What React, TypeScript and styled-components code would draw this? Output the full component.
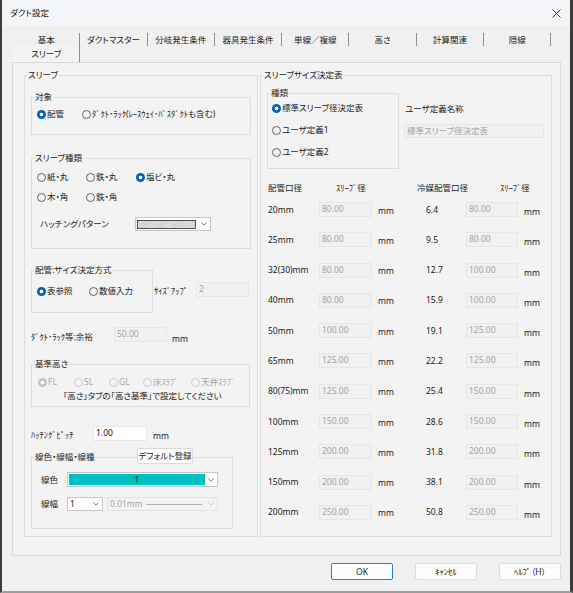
import { Fragment } from "react";
import styled, { createGlobalStyle } from "styled-components";

const GlobalStyle = createGlobalStyle`
  * { box-sizing: border-box; }
  body {
    margin: 0;
    background: #f0f0f0;
    font-family: "Noto Sans", "Noto Sans CJK JP", sans-serif;
    font-size: 8.5px;
    line-height: 12px;
    color: #1b1b1b;
    font-feature-settings: "palt";
  }
`;

const Window = styled.div`
  width: 573px;
  height: 593px;
  display: flex;
  flex-direction: column;
  background: #f0f0f0;
  border-left: 2px solid #3b3b3b;
  border-right: 3px solid #3b3b3b;
  border-bottom: 2px solid #9c9c9c;
`;

const TitleBar = styled.div`
  height: 26px;
  flex: none;
  display: flex;
  align-items: center;
  justify-content: space-between;
  padding: 0 9px 0 8px;
  background: #f3f5f9;
`;

const TabStrip = styled.div`
  margin: 7px 0 0 11px;
  display: flex;
  flex-direction: column;
`;

const TabRow = styled.div<{ $h: number }>`
  display: flex;
  height: ${(p) => p.$h}px;
`;

const Tab = styled.div<{ $active?: boolean }>`
  width: 67.3px;
  display: flex;
  align-items: center;
  justify-content: center;
  border-right: 1px solid #8f8f8f;
  background: ${(p) => (p.$active ? "#f3f3f3" : "transparent")};
`;

const Panel = styled.div`
  margin-left: 10px;
  width: 549px;
  height: 494px;
  flex: none;
  border: 1px solid #d9d9d9;
  background: #f3f3f3;
  padding: 6px 0 0 11px;
  display: flex;
  gap: 2px;
`;

const Group = styled.fieldset<{ $w: number; $h: number; $mt?: number; $ml?: number }>`
  position: relative;
  flex: none;
  margin: ${(p) => p.$mt ?? 0}px 0 0 ${(p) => p.$ml ?? 0}px;
  padding: 0;
  min-width: 0;
  width: ${(p) => p.$w}px;
  height: ${(p) => p.$h}px;
  border: 1px solid #dcdcdc;
`;

const Legend = styled.legend`
  margin-left: 2px;
  padding: 0 1px;
  line-height: 12px;
`;

const Row = styled.div<{ $mt?: number; $ml?: number; $h?: number; $top?: boolean }>`
  display: flex;
  align-items: ${(p) => (p.$top ? "flex-start" : "center")};
  margin-top: ${(p) => p.$mt ?? 0}px;
  padding-left: ${(p) => p.$ml ?? 0}px;
  height: ${(p) => (p.$h ? `${p.$h}px` : "auto")};
`;

const Column = styled.div<{ $ml?: number }>`
  display: flex;
  flex-direction: column;
  margin-left: ${(p) => p.$ml ?? 0}px;
`;

const Label = styled.span<{ $w?: number; $ml?: number; $mt?: number; $pt?: number; $dim?: boolean }>`
  flex: none;
  display: inline-block;
  width: ${(p) => (p.$w ? `${p.$w}px` : "auto")};
  margin-left: ${(p) => p.$ml ?? 0}px;
  margin-top: ${(p) => p.$mt ?? 0}px;
  padding-top: ${(p) => p.$pt ?? 0}px;
  color: ${(p) => (p.$dim ? "#a6a6a6" : "inherit")};
  white-space: nowrap;
`;

const Field = styled.div<{ $w: number; $h?: number; $white?: boolean; $mt?: number }>`
  flex: none;
  width: ${(p) => p.$w}px;
  height: ${(p) => p.$h ?? 15}px;
  margin-top: ${(p) => p.$mt ?? 0}px;
  padding: 0 2px;
  line-height: 12px;
  border: 1px solid #e6e6e6;
  background: ${(p) => (p.$white ? "#ffffff" : "#f1f1f1")};
  color: ${(p) => (p.$white ? "#1b1b1b" : "#a3a3a3")};
  white-space: nowrap;
  overflow: hidden;
`;

const RadioItem = styled.span<{ $w?: number; $disabled?: boolean }>`
  flex: none;
  display: inline-flex;
  align-items: center;
  gap: 1px;
  width: ${(p) => (p.$w ? `${p.$w}px` : "auto")};
  color: ${(p) => (p.$disabled ? "#a6a6a6" : "inherit")};
  white-space: nowrap;
`;

const Dot = styled.span<{ $checked?: boolean; $disabled?: boolean }>`
  flex: none;
  width: 9px;
  height: 9px;
  border-radius: 50%;
  border: ${(p) =>
    p.$checked ? "none" : `1px solid ${p.$disabled ? "#c9c9c9" : "#646464"}`};
  background: ${(p) =>
    p.$checked
      ? `radial-gradient(circle, #fff 0 1.7px, ${p.$disabled ? "#c4c4c4" : "#005fb8"} 2.2px 100%)`
      : "transparent"};
`;

const Radio = ({
  w,
  checked,
  disabled,
  children,
}: {
  w?: number;
  checked?: boolean;
  disabled?: boolean;
  children: React.ReactNode;
}) => (
  <RadioItem $w={w} $disabled={disabled}>
    <Dot $checked={checked} $disabled={disabled} />
    <span>{children}</span>
  </RadioItem>
);

const RadioStack = styled.div`
  display: flex;
  flex-direction: column;
  gap: 10px;
  margin-top: 3px;
  padding-left: 4px;
`;

const Combo = styled.div<{ $w: number; $h: number; $ml?: number; $disabled?: boolean }>`
  flex: none;
  width: ${(p) => p.$w}px;
  height: ${(p) => p.$h}px;
  margin-left: ${(p) => p.$ml ?? 0}px;
  display: flex;
  align-items: center;
  padding: 1px 0 1px 1px;
  border: 1px solid ${(p) => (p.$disabled ? "#e2e2e2" : "#c6c6c6")};
  background: ${(p) => (p.$disabled ? "#f3f3f3" : "#ffffff")};
  color: ${(p) => (p.$disabled ? "#a6a6a6" : "inherit")};
`;

const ComboText = styled.span`
  padding-left: 1px;
  white-space: nowrap;
`;

const ComboLine = styled.span`
  flex: 1;
  height: 1px;
  margin: 0 3px 0 3px;
  background: #b0b0b0;
`;

const ColorFill = styled.span`
  flex: 1;
  align-self: stretch;
  display: flex;
  align-items: center;
  justify-content: center;
  background: #00bfbf;
  color: #111;
`;

const ArrowBox = styled.span`
  flex: none;
  width: 12px;
  margin-left: auto;
  display: flex;
  align-items: center;
  justify-content: center;
`;

const Chevron = ({ dim }: { dim?: boolean }) => (
  <ArrowBox>
    <svg width="6" height="4" viewBox="0 0 6 4">
      <polyline
        points="0.5,0.5 3,3.2 5.5,0.5"
        fill="none"
        stroke={dim ? "#c4c4c4" : "#6a6a6a"}
        strokeWidth="0.9"
      />
    </svg>
  </ArrowBox>
);

/* sits on top of the group box border, like the Win32 button does */
const SmallButton = styled.div`
  position: absolute;
  top: -15px;
  left: 105px;
  width: 56px;
  height: 16px;
  display: flex;
  align-items: center;
  justify-content: center;
  white-space: nowrap;
  background: #fdfdfd;
  border: 1px solid #dadada;
  border-radius: 2px;
`;

const Note = styled.div`
  margin: 2px 0 0 31px;
  white-space: nowrap;
`;

const Unit = styled.span<{ $ml?: number; $pt?: number }>`
  flex: none;
  margin-left: ${(p) => p.$ml ?? 0}px;
  padding-top: ${(p) => p.$pt ?? 0}px;
`;

const Header = styled.div`
  display: flex;
  margin: 13px 0 0 7px;
  height: 12px;
`;

const SizeGrid = styled.div`
  display: grid;
  grid-template-columns: 51px 53px 54px 40px 52px auto;
  grid-auto-rows: 15px;
  row-gap: 15.3px;
  margin: 8px 0 0 7px;
  align-items: center;
`;

const Cell = styled.span<{ $pt?: number; $pl?: number }>`
  padding-top: ${(p) => p.$pt ?? 0}px;
  padding-left: ${(p) => p.$pl ?? 0}px;
  white-space: nowrap;
`;

const Footer = styled.div`
  display: flex;
  justify-content: flex-end;
  gap: 22px;
  margin-top: 7px;
  padding-right: 9px;
`;

const Button = styled.div<{ $primary?: boolean }>`
  width: 62px;
  height: 17px;
  display: flex;
  align-items: center;
  justify-content: center;
  background: #fdfdfd;
  border: 1px solid ${(p) => (p.$primary ? "#2b7fd0" : "#dddddd")};
  border-radius: 2px;
`;

const tabs = ["基本", "ダクトマスター", "分岐発生条件", "器具発生条件", "単線／複線", "高さ", "計算関連", "隠線"];

const sizes: [string, string, string, string][] = [
  ["20mm", "80.00", "6.4", "80.00"],
  ["25mm", "80.00", "9.5", "80.00"],
  ["32(30)mm", "80.00", "12.7", "100.00"],
  ["40mm", "80.00", "15.9", "100.00"],
  ["50mm", "100.00", "19.1", "125.00"],
  ["65mm", "125.00", "22.2", "125.00"],
  ["80(75)mm", "125.00", "25.4", "150.00"],
  ["100mm", "150.00", "28.6", "150.00"],
  ["125mm", "200.00", "31.8", "200.00"],
  ["150mm", "200.00", "38.1", "200.00"],
  ["200mm", "250.00", "50.8", "250.00"],
];

const Hatch = () => (
  <svg width="59" height="9" viewBox="0 0 59 9">
    <defs>
      <pattern id="hatch" width="2" height="2" patternUnits="userSpaceOnUse" patternTransform="rotate(45)">
        <line x1="0" y1="0" x2="0" y2="2" stroke="#3a3a3a" strokeWidth="0.8" />
      </pattern>
    </defs>
    <rect x="0.5" y="0.5" width="58" height="8" fill="url(#hatch)" stroke="#2a2a2a" strokeWidth="0.8" />
  </svg>
);

export default function App() {
  return (
    <>
      <GlobalStyle />
      <Window>
        <TitleBar>
          <span>ダクト設定</span>
          <svg width="9" height="9" viewBox="0 0 9 9">
            <path d="M0.5 0.5 L8.5 8.5 M8.5 0.5 L0.5 8.5" stroke="#333" strokeWidth="1" />
          </svg>
        </TitleBar>

        <TabStrip>
          <TabRow $h={13}>
            {tabs.map((t) => (
              <Tab key={t}>{t}</Tab>
            ))}
          </TabRow>
          <TabRow $h={16}>
            <Tab $active>スリーブ</Tab>
          </TabRow>
        </TabStrip>

        <Panel>
          <Group $w={234} $h={468}>
            <Legend>スリーブ</Legend>

            <Group $w={220} $h={44} $mt={10} $ml={6}>
              <Legend>対象</Legend>
              <Row $mt={5} $ml={5}>
                <Radio w={45} checked>配管</Radio>
                <Radio>ﾀﾞｸﾄ･ﾗｯｸ(ﾚｰｽｳｪｲ･ﾊﾞｽﾀﾞｸﾄも含む)</Radio>
              </Row>
            </Group>

            <Group $w={220} $h={97} $mt={17} $ml={6}>
              <Legend>スリーブ種類</Legend>
              <Row $mt={7} $ml={5}>
                <Radio w={49}>紙・丸</Radio>
                <Radio w={50}>鉄・丸</Radio>
                <Radio checked>塩ビ・丸</Radio>
              </Row>
              <Row $mt={8} $ml={5}>
                <Radio w={49}>木・角</Radio>
                <Radio>鉄・角</Radio>
              </Row>
              <Row $mt={14} $ml={8} $h={14}>
                <Label $w={95}>ハッチングパターン</Label>
                <Combo $w={76} $h={14}>
                  <Hatch />
                  <Chevron />
                </Combo>
              </Row>
            </Group>

            <Row $mt={15} $ml={6} $top>
              <Group $w={122} $h={49}>
                <Legend>配管:サイズ決定方式</Legend>
                <Row $mt={9} $ml={5}>
                  <Radio w={52} checked>表参照</Radio>
                  <Radio>数値入力</Radio>
                </Row>
              </Group>
              <Row $mt={18} $h={15}>
                <Label $w={42} $ml={1} $pt={3}>ｻｲｽﾞｱｯﾌﾟ</Label>
                <Field $w={53}>2</Field>
              </Row>
            </Row>

            <Row $mt={14} $ml={6} $h={15}>
              <Label $w={83} $pt={4}>ﾀﾞｸﾄ･ﾗｯｸ等:余裕</Label>
              <Field $w={53}>50.00</Field>
              <Unit $ml={5} $pt={8}>mm</Unit>
            </Row>

            <Group $w={219} $h={49} $mt={16} $ml={6}>
              <Legend>基準高さ</Legend>
              <Row $mt={6} $ml={6}>
                <Radio w={36} checked disabled>FL</Radio>
                <Radio w={35} disabled>SL</Radio>
                <Radio w={34} disabled>GL</Radio>
                <Radio w={48} disabled>床ｽﾗﾌﾞ</Radio>
                <Radio disabled>天井ｽﾗﾌﾞ</Radio>
              </Row>
              <Note>「高さ」タブの「高さ基準」で設定してください</Note>
            </Group>

            <Row $mt={19} $ml={6} $h={15}>
              <Label $w={62} $pt={2}>ﾊｯﾁﾝｸﾞﾋﾟｯﾁ</Label>
              <Field $w={54} $white>1.00</Field>
              <Unit $ml={6} $pt={5}>mm</Unit>
            </Row>

            <Group $w={202} $h={78} $mt={10} $ml={6}>
              <Legend>線色・線幅・線種</Legend>
              <SmallButton>デフォルト登録</SmallButton>
              <Row $mt={9} $ml={9}>
                <Label $w={26}>線色</Label>
                <Combo $w={151} $h={15}>
                  <ColorFill>1</ColorFill>
                  <Chevron />
                </Combo>
              </Row>
              <Row $mt={10} $ml={9}>
                <Label $w={26}>線幅</Label>
                <Combo $w={36} $h={14}>
                  <ComboText>1</ComboText>
                  <Chevron />
                </Combo>
                <Combo $w={111} $h={14} $ml={4} $disabled>
                  <ComboText>0.01mm</ComboText>
                  <ComboLine />
                  <Chevron dim />
                </Combo>
              </Row>
            </Group>
          </Group>

          <Group $w={292} $h={468}>
            <Legend>スリーブサイズ決定表</Legend>
            <Row $mt={6} $ml={6} $top>
              <Group $w={132} $h={82}>
                <Legend>種類</Legend>
                <RadioStack>
                  <Radio checked>標準スリーブ径決定表</Radio>
                  <Radio>ユーザ定義1</Radio>
                  <Radio>ユーザ定義2</Radio>
                </RadioStack>
              </Group>
              <Column $ml={5}>
                <Label $mt={16} $ml={1}>ユーザ定義名称</Label>
                <Field $w={140} $h={14} $mt={9}>標準スリーブ径決定表</Field>
              </Column>
            </Row>

            <Header>
              <Label $w={68}>配管口径</Label>
              <Label $w={81}>ｽﾘｰﾌﾞ径</Label>
              <Label $w={83}>冷媒配管口径</Label>
              <Label>ｽﾘｰﾌﾞ径</Label>
            </Header>

            <SizeGrid>
              {sizes.map(([pipe, sleeve, ref, sleeve2]) => (
                <Fragment key={pipe}>
                  <Cell>{pipe}</Cell>
                  <Field $w={53}>{sleeve}</Field>
                  <Cell $pl={6} $pt={2}>mm</Cell>
                  <Cell>{ref}</Cell>
                  <Field $w={52}>{sleeve2}</Field>
                  <Cell $pl={6} $pt={5}>mm</Cell>
                </Fragment>
              ))}
            </SizeGrid>
          </Group>
        </Panel>

        <Footer>
          <Button $primary>OK</Button>
          <Button>ｷｬﾝｾﾙ</Button>
          <Button>ﾍﾙﾌﾟ（H）</Button>
        </Footer>
      </Window>
    </>
  );
}
